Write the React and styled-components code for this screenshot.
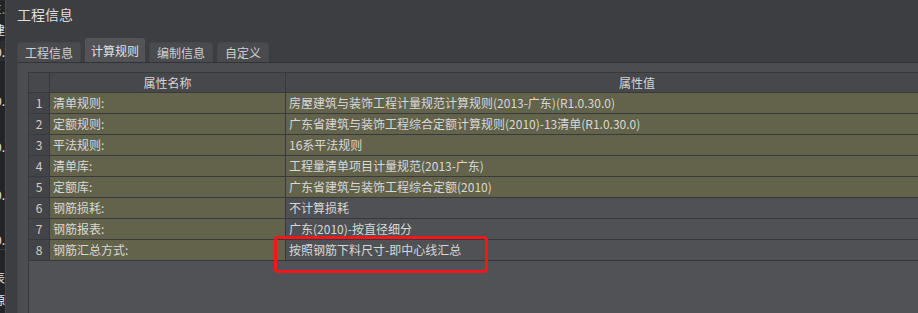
import React from "react";
import styled, { createGlobalStyle } from "styled-components";

const Global = createGlobalStyle`
  html, body { margin: 0; padding: 0; background: #3d3e41; overflow: hidden; }
  body { font-family: "Noto Sans CJK SC", "Noto Sans", sans-serif; }
`;

const Page = styled.div`
  display: flex;
  width: 918px;
  height: 313px;
  overflow: hidden;
`;

const Strip = styled.div`
  width: 5px;
  flex: none;
  background: #232428;
  border-right: 1px solid #4a4b4e;
  display: flex;
  flex-direction: column;
  overflow: hidden;
`;

const StripItem = styled.div`
  height: ${(p) => p.$h}px;
  flex: none;
  display: flex;
  justify-content: flex-end;
  align-items: center;
  font-size: 12px;
  color: ${(p) => (p.$dim ? "#9a9a9a" : "#e6e6e6")};
  background: ${(p) => (p.$hl ? "#2c2d31" : "transparent")};
  border-bottom: ${(p) => (p.$line ? "1px solid #3a3b3e" : "none")};
  white-space: nowrap;
`;

const Window = styled.div`
  flex: 1;
  min-width: 0;
  display: flex;
  flex-direction: column;
  padding-left: 11px;
  background: #3d3e41;
`;

const Title = styled.div`
  height: 38px;
  flex: none;
  box-sizing: border-box;
  padding-top: 4px;
  font-size: 14px;
  line-height: 20px;
  color: #dedede;
`;

const TabBar = styled.div`
  display: flex;
  align-items: flex-end;
  gap: 4px;
  height: 24px;
  flex: none;
`;

const Tab = styled.div`
  box-sizing: border-box;
  height: ${(p) => (p.$active ? 24 : 20)}px;
  padding: 0 ${(p) => (p.$active ? 5 : 7)}px;
  display: flex;
  align-items: center;
  font-size: 12px;
  color: ${(p) => (p.$active ? "#e2e2e2" : "#cfcfcf")};
  background: ${(p) => (p.$active ? "#525356" : "#4a4b4e")};
  border-radius: 3px 3px 0 0;
  border: 1px solid ${(p) => (p.$active ? "#55565a" : "#45464a")};
  border-bottom: none;
`;

const Panel = styled.div`
  flex: 1;
  background: #4c4d50;
  border-top: 1px solid #323336;
  border-left: 1px solid #444548;
  padding: 9px 0 0 10px;
  display: flex;
  min-height: 0;
`;

const TableBox = styled.div`
  flex: 1;
  background: #515256;
  border-left: 1px solid #38393c;
  border-top: 1px solid #38393c;
  overflow: hidden;
  min-width: 0;
`;

const Grid = styled.div`
  display: grid;
  grid-template-columns: 20px 235px 702px;
  grid-template-rows: 19px repeat(8, 20px);
  gap: 1px;
  background: #38393c;
  padding: 0 1px 1px 0;
  width: max-content;
`;

const HeadCell = styled.div`
  background: #47484c;
  color: #d6d6d6;
  font-size: 12px;
  line-height: 19px;
  text-align: center;
  white-space: nowrap;
`;

const NumCell = styled.div`
  background: #434448;
  color: #cfcfcf;
  font-size: 12px;
  line-height: 20px;
  text-align: center;
`;

const Cell = styled.div`
  position: relative;
  background: ${(p) => (p.$olive ? "#63634b" : "#505155")};
  color: #d8d8d8;
  font-size: 12px;
  line-height: 20px;
  padding-left: 3px;
  white-space: nowrap;
`;

const Highlight = styled.div`
  position: absolute;
  left: -12px;
  top: -4px;
  width: 214px;
  height: 37px;
  box-sizing: border-box;
  border: 3px solid #f3171c;
  border-radius: 4px;
  pointer-events: none;
`;

const rows = [
  ["清单规则:", "房屋建筑与装饰工程计量规范计算规则(2013-广东)(R1.0.30.0)"],
  ["定额规则:", "广东省建筑与装饰工程综合定额计算规则(2010)-13清单(R1.0.30.0)"],
  ["平法规则:", "16系平法规则"],
  ["清单库:", "工程量清单项目计量规范(2013-广东)"],
  ["定额库:", "广东省建筑与装饰工程综合定额(2010)"],
  ["钢筋损耗:", "不计算损耗"],
  ["钢筋报表:", "广东(2010)-按直径细分"],
  ["钢筋汇总方式:", "按照钢筋下料尺寸-即中心线汇总"],
];

const strip = [
  { h: 17, t: "E.", dim: true },
  { h: 24, t: "建" },
  { h: 20, t: "0.", hl: true },
  { h: 28, t: "" },
  { h: 22, t: "0." },
  { h: 24, t: "" },
  { h: 22, t: "0." },
  { h: 26, t: "" },
  { h: 22, t: "0." },
  { h: 24, t: "" },
  { h: 20, t: "0.", line: true },
  { h: 16, t: "" },
  { h: 22, t: "表" },
  { h: 22, t: "源" },
];

const tabs = ["工程信息", "计算规则", "编制信息", "自定义"];

export default function App() {
  return (
    <>
      <Global />
      <Page>
        <Strip>
          {strip.map((s, i) => (
            <StripItem key={i} $h={s.h} $dim={s.dim} $hl={s.hl} $line={s.line}>
              {s.t}
            </StripItem>
          ))}
        </Strip>
        <Window>
          <Title>工程信息</Title>
          <TabBar>
            {tabs.map((t, i) => (
              <Tab key={t} $active={i === 1}>
                {t}
              </Tab>
            ))}
          </TabBar>
          <Panel>
            <TableBox>
              <Grid>
                <HeadCell />
                <HeadCell>属性名称</HeadCell>
                <HeadCell>属性值</HeadCell>
                {rows.map(([name, value], i) => (
                  <React.Fragment key={i}>
                    <NumCell>{i + 1}</NumCell>
                    <Cell $olive>{name}</Cell>
                    <Cell $olive={i < 5}>
                      {value}
                      {i === 7 && <Highlight />}
                    </Cell>
                  </React.Fragment>
                ))}
              </Grid>
            </TableBox>
          </Panel>
        </Window>
      </Page>
    </>
  );
}
